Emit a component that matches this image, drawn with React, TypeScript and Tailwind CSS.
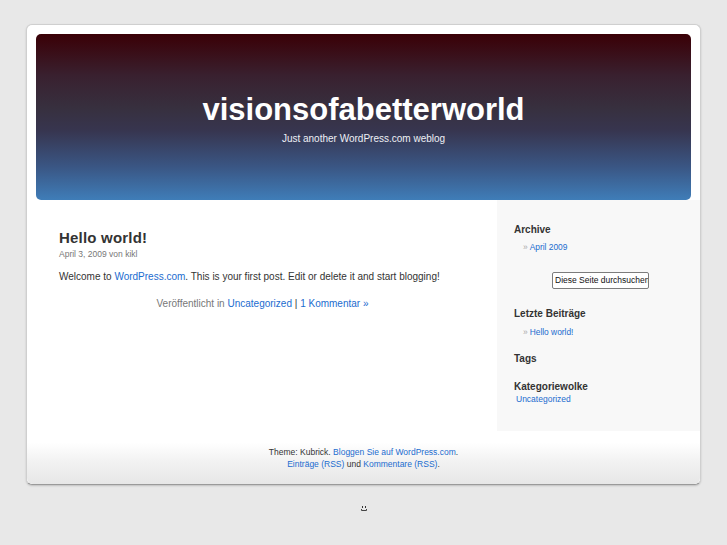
import React from "react";

const link = "text-[#1b6ccf]";

export default function App() {
  return (
    <div className="min-h-[545px] w-full bg-[#e8e8e8] pt-[24px] font-['Liberation_Sans',Arial,sans-serif]">
      <div className="mx-auto w-[675px] rounded-[6px] border border-[#cfcfcf] border-b-[#9a9a9a] bg-white pt-[9px] shadow-[0_1px_2px_rgba(0,0,0,0.18)]">
        {/* Header */}
        <div className="mx-[9px] h-[166px] rounded-[5px] bg-[linear-gradient(180deg,#3a0006_0%,#39202f_25%,#37303f_45%,#37354f_58%,#3a5684_80%,#3f7db8_100%)] pt-[58px] text-center">
          <div className="text-[31px] font-bold leading-[36px] text-white">visionsofabetterworld</div>
          <div className="mt-[4px] text-[10px] leading-[14px] text-[#eef0f5]">Just another WordPress.com weblog</div>
        </div>

        {/* Content */}
        <div className="flex h-[231px]">
          <div className="w-[470px] pl-[32px] pr-[31px] pt-[29px]">
            <div className="text-[15px] font-bold leading-[18px] tracking-[0.2px] text-[#333]">Hello world!</div>
            <div className="mt-[1px] text-[8.5px] leading-[12px] text-[#777]">April 3, 2009 von kikl</div>
            <div className="mt-[10px] text-[10px] leading-[14px] text-[#333]">
              Welcome to <span className={link}>WordPress.com</span>. This is your first post. Edit or delete it and start blogging!
            </div>
            <div className="mt-[13px] text-center text-[10px] leading-[14px] text-[#777]">
              Veröffentlicht in <span className={link}>Uncategorized</span> <span className="text-[#333]">|</span>{" "}
              <span className={link}>1 Kommentar »</span>
            </div>
          </div>

          <div className="w-[203px] bg-[#f8f8f8] pl-[17px] pt-[23px]">
            <div className="text-[10px] font-bold leading-[14px] text-[#333]">Archive</div>
            <div className="mt-[4px] flex items-center pl-[9px] text-[8.4px] leading-[12px]">
              <span className="mr-[2px] text-[#aaa]">»</span>
              <span className={link}>April 2009</span>
            </div>

            <div className="ml-[38px] mt-[19px] h-[17px] w-[97px] overflow-hidden whitespace-nowrap rounded-[2px] border border-[#7c7c7c] bg-white pl-[2px] text-[8.5px] leading-[15px] text-[#111]">
              Diese Seite durchsuchen
            </div>

            <div className="mt-[18px] text-[10px] font-bold leading-[14px] text-[#333]">Letzte Beiträge</div>
            <div className="mt-[5px] flex items-center pl-[9px] text-[8.4px] leading-[12px]">
              <span className="mr-[2px] text-[#aaa]">»</span>
              <span className={link}>Hello world!</span>
            </div>

            <div className="mt-[14px] text-[10px] font-bold leading-[14px] text-[#333]">Tags</div>

            <div className="mt-[14px] text-[10px] font-bold leading-[14px] text-[#333]">Kategoriewolke</div>
            <div className={`-mt-[1px] pl-[2px] text-[8.5px] leading-[12px] ${link}`}>Uncategorized</div>
          </div>
        </div>

        {/* Footer */}
        <div className="h-[53px] rounded-b-[6px] bg-[linear-gradient(180deg,#ffffff_0%,#ffffff_22%,#f1f1f1_60%,#e7e7e7_100%)] pt-[15px] text-center text-[8.5px] leading-[12px] text-[#333]">
          <div>
            Theme: Kubrick. <span className={link}>Bloggen Sie auf WordPress.com</span>.
          </div>
          <div>
            <span className={link}>Einträge (RSS)</span> und <span className={link}>Kommentare (RSS)</span>.
          </div>
        </div>
      </div>

      {/* smiley */}
      <div className="mt-[21px] flex justify-center">
        <svg width="6" height="6" viewBox="0 0 6 6" className="ml-[1px]">
          <rect x="1" y="0" width="1" height="2" fill="#333" />
          <rect x="4" y="0" width="1" height="2" fill="#333" />
          <path d="M0.5 3 V4.5 H5.5 V3" stroke="#444" strokeWidth="1" fill="none" />
        </svg>
      </div>
    </div>
  );
}
